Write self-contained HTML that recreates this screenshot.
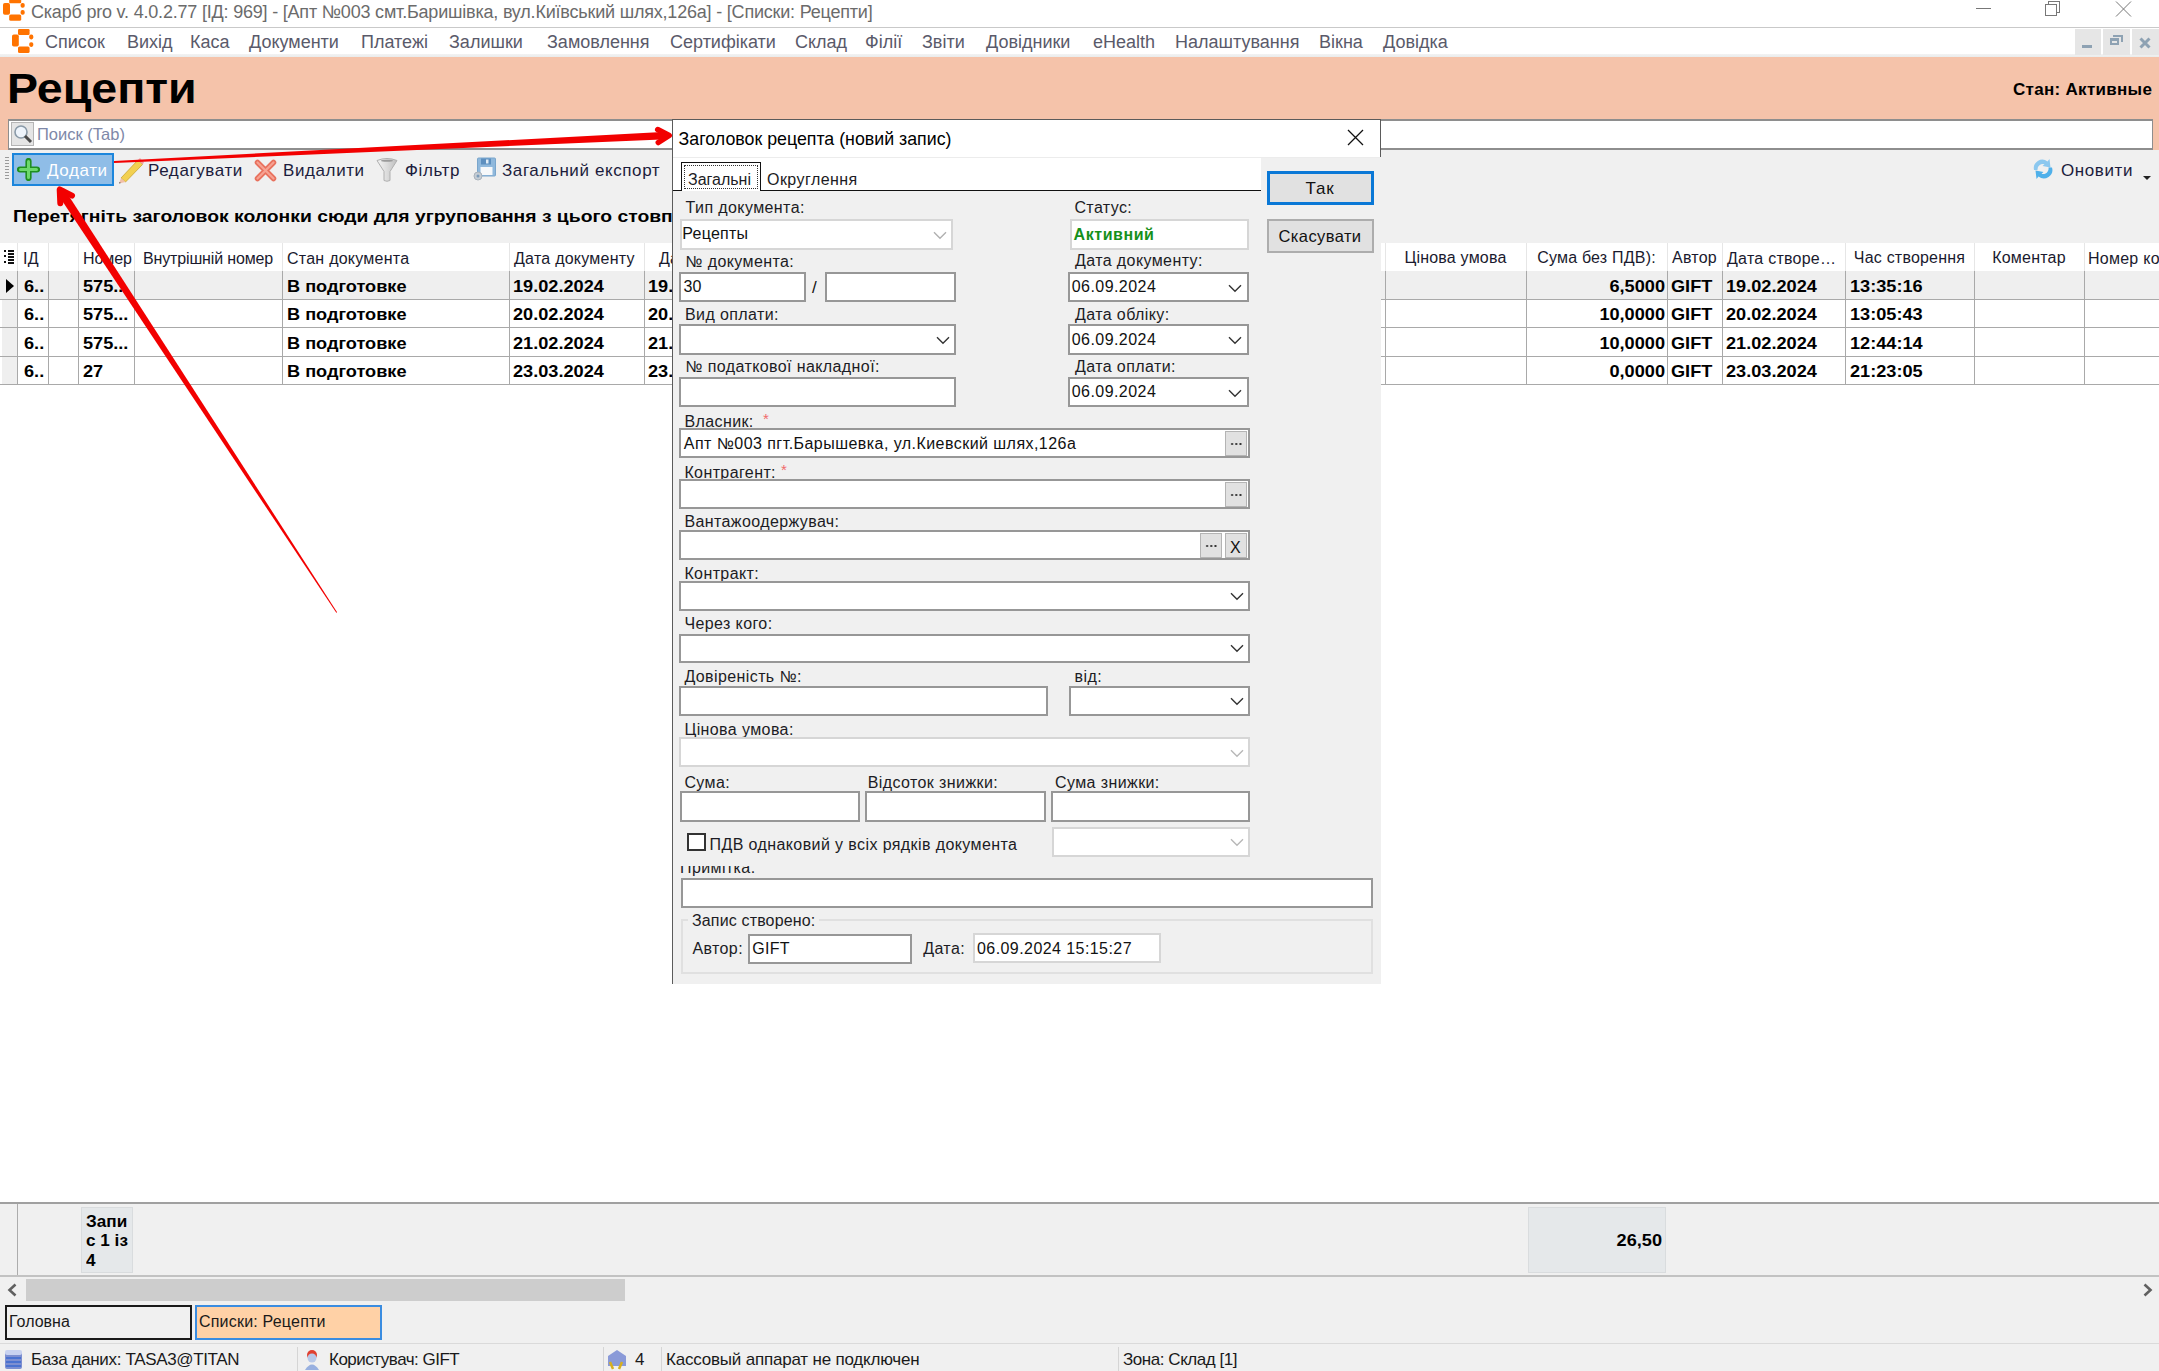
<!DOCTYPE html>
<html><head><meta charset="utf-8">
<style>
*{box-sizing:border-box;margin:0;padding:0}
html,body{width:2159px;height:1371px;overflow:hidden;background:#fff}
body{position:relative;font-family:"Liberation Sans",sans-serif;color:#000}
.a{position:absolute}
.t{position:absolute;white-space:nowrap;line-height:1}
</style></head><body>

<!-- TITLE BAR -->
<div class="a" style="left:0;top:0;width:2159px;height:27px;background:#fff"></div>
<div class="a" style="left:0;top:27px;width:2159px;height:1px;background:#c9c9c9"></div>
<svg class="a" style="left:3px;top:-3px" width="23" height="24"><g fill="#ff7300"><rect x="6.2" y="0" width="12" height="6.2" rx="1"/><rect x="0" y="5.9" width="7" height="11.8" rx="1.8"/><rect x="6.2" y="17.4" width="12" height="6.4" rx="1.6"/><rect x="17.6" y="5.9" width="4.1" height="4.8" rx="1.8"/><rect x="17.6" y="13.1" width="4.1" height="4.6" rx="1.8"/></g></svg>
<div class="t" id="ttl" style="left:31px;top:2.5px;font-size:18px;color:#6b6b6b;letter-spacing:-0.2px">Скарб pro v. 4.0.2.77 [ІД: 969] - [Апт №003 смт.Баришівка, вул.Київський шлях,126а] - [Списки: Рецепти]</div>
<div class="a" style="left:1976px;top:8px;width:15px;height:1px;background:#777"></div>
<div class="a" style="left:2048px;top:1px;width:12px;height:12px;border:1px solid #777"></div>
<div class="a" style="left:2045px;top:4px;width:12px;height:12px;border:1px solid #777;background:#fff"></div>
<svg class="a" style="left:2115px;top:1px" width="17" height="16"><path d="M1 0.5 L16 15.5 M16 0.5 L1 15.5" stroke="#777" stroke-width="1"/></svg>

<!-- MENU BAR -->
<div class="a" style="left:0;top:28px;width:2159px;height:26px;background:#fff"></div>
<div class="a" style="left:0;top:54px;width:2159px;height:3px;background:linear-gradient(#f3f3f3,#e9ecec)"></div>
<svg class="a" style="left:11.8px;top:28.6px" width="23" height="25"><g fill="#ff7300"><rect x="6" y="0" width="11.6" height="5.9" rx="1.2"/><rect x="0" y="5.5" width="6.8" height="12" rx="1.8"/><rect x="6" y="17.5" width="11.6" height="6.6" rx="1.6"/><rect x="17.2" y="5.6" width="4.1" height="4.8" rx="1.8"/><rect x="17.2" y="13.2" width="4.1" height="4.7" rx="1.8"/></g></svg>
<div class="t" style="left:45px;top:33px;font-size:18px;color:#5a5a6a;word-spacing:0">
<span style="position:absolute;left:0">Список</span><span style="position:absolute;left:82px">Вихід</span><span style="position:absolute;left:145px">Каса</span><span style="position:absolute;left:204px">Документи</span><span style="position:absolute;left:316px">Платежі</span><span style="position:absolute;left:404px">Залишки</span><span style="position:absolute;left:502px">Замовлення</span><span style="position:absolute;left:625px">Сертифікати</span><span style="position:absolute;left:750px">Склад</span><span style="position:absolute;left:820px">Філії</span><span style="position:absolute;left:877px">Звіти</span><span style="position:absolute;left:941px">Довідники</span><span style="position:absolute;left:1048px">eHealth</span><span style="position:absolute;left:1130px">Налаштування</span><span style="position:absolute;left:1274px">Вікна</span><span style="position:absolute;left:1338px">Довідка</span>
</div>
<div class="a" style="left:2075px;top:29px;width:26px;height:26px;background:#e6e6e6"></div>
<div class="a" style="left:2103px;top:29px;width:27px;height:26px;background:#e6e6e6"></div>
<div class="a" style="left:2132px;top:29px;width:27px;height:26px;background:#e6e6e6"></div>
<div class="a" style="left:2082px;top:45px;width:10px;height:3px;background:#8ea2b3"></div>
<div class="a" style="left:2110px;top:38px;width:9px;height:7px;border:2px solid #8ea2b3;border-top-width:3px"></div>
<div class="a" style="left:2113px;top:35px;width:10px;height:7px;border-top:2px solid #8ea2b3;border-right:2px solid #8ea2b3"></div>
<svg class="a" style="left:2139px;top:37px" width="12" height="12"><path d="M1.5 1.5 L10.5 10.5 M10.5 1.5 L1.5 10.5" stroke="#8ea2b3" stroke-width="3"/></svg>

<!-- PEACH HEADER -->
<div class="a" style="left:0;top:57px;width:2159px;height:93px;background:#f5c3aa"></div>
<div class="t" style="left:6.5px;top:67px;font-size:43px;font-weight:bold;color:#000;transform:scaleX(1.082);transform-origin:0 0">Рецепти</div>
<div class="t" style="left:2013px;top:80.5px;font-size:17px;font-weight:bold;color:#000;letter-spacing:0.3px">Стан: Активные</div>

<!-- SEARCH -->
<div class="a" style="left:8px;top:119px;width:2145px;height:31px;background:#fff;border:2px solid #8e8e8e;border-left-width:1px;border-right-width:1px"></div>
<div class="a" style="left:11px;top:122px;width:23px;height:24px;background:#e5e5e5;border:1px solid #b5b5b5"></div>
<svg class="a" style="left:12px;top:123px" width="22" height="22"><circle cx="9" cy="9" r="6" fill="#eef4fb" stroke="#8a9aa8" stroke-width="1.6"/><path d="M13 13 L19 19" stroke="#4a4a4a" stroke-width="3"/></svg>
<div class="t" style="left:37px;top:125.5px;font-size:16.5px;color:#7e88a8">Поиск (Tab)</div>

<!-- TOOLBAR -->
<div class="a" style="left:0;top:150px;width:2159px;height:93px;background:#f0f0f0"></div>
<div class="a" style="left:5px;top:157px;width:4px;height:24px;background:repeating-linear-gradient(#9a9a9a 0 1px,transparent 1px 3px)"></div>
<div class="a" style="left:12px;top:153px;width:102px;height:33px;background:#8fbde7;border:2px solid #1c86dc"></div>
<svg class="a" style="left:17px;top:158px" width="23" height="23"><path d="M11.5 3 V20 M3 11.5 H20" stroke="#1f8f1f" stroke-width="6.2" stroke-linecap="round"/><path d="M11.5 3.5 V19.5 M3.5 11.5 H19.5" stroke="#6cd86c" stroke-width="3" stroke-linecap="round"/></svg>
<div class="t" style="left:47px;top:162px;font-size:17px;color:#fff;letter-spacing:0.6px">Додати</div>
<svg class="a" style="left:117px;top:156px" width="28" height="28"><path d="M4 22 L21 4 L25.5 8.5 L8.5 26 Z" fill="#f2d050" stroke="#c9a530" stroke-width="0.8"/><path d="M21 4 L23 2 L27 6.5 L25.5 8.5 Z" fill="#f0a0a0"/><path d="M4 22 L2 27.5 L8.5 26 Z" fill="#f2c0a8"/><path d="M2.5 26 L2 27.5 L4 27 Z" fill="#555"/></svg>
<div class="t" style="left:148px;top:162px;font-size:17px;color:#1c1c3c;letter-spacing:0.6px">Редагувати</div>
<svg class="a" style="left:254px;top:159px" width="23" height="23"><path d="M3.5 3.5 L19.5 19.5 M19.5 3.5 L3.5 19.5" stroke="#e8705c" stroke-width="5.5" stroke-linecap="round"/><path d="M3.5 3.5 L19.5 19.5 M19.5 3.5 L3.5 19.5" stroke="#f7a292" stroke-width="2.2" stroke-linecap="round"/></svg>
<div class="t" style="left:283px;top:162px;font-size:17px;color:#1c1c3c;letter-spacing:0.6px">Видалити</div>
<svg class="a" style="left:376px;top:157px" width="22" height="25"><defs><linearGradient id="fg" x1="0" x2="1"><stop offset="0" stop-color="#f4f4f4"/><stop offset="0.5" stop-color="#dcdcdc"/><stop offset="1" stop-color="#bdbdbd"/></linearGradient></defs><path d="M1 3.5 Q11 -0.5 21 3.5 L14 14.5 V23.5 Q11 25 8 23.5 V14.5 Z" fill="url(#fg)" stroke="#b0b0b0" stroke-width="1"/><ellipse cx="11" cy="3.8" rx="6" ry="1" fill="#9a9a9a"/></svg>
<div class="t" style="left:405px;top:162px;font-size:17px;color:#1c1c3c;letter-spacing:0.6px">Фільтр</div>
<svg class="a" style="left:472px;top:157px" width="25" height="25"><rect x="5.5" y="1" width="18" height="18" rx="1" fill="#8fb8dc" stroke="#7aa6cc"/><rect x="9" y="1.5" width="10" height="6" fill="#5d8fbf"/><rect x="14" y="2.5" width="2.5" height="4" fill="#e0ecf6"/><rect x="8.5" y="10" width="12" height="8" fill="#f6f8fa"/><circle cx="6" cy="19" r="4" fill="#c4ccd4" stroke="#a8b2bc"/><circle cx="6" cy="19" r="1.5" fill="#7a9ab8"/></svg>
<div class="t" style="left:502px;top:162px;font-size:17px;color:#1c1c3c;letter-spacing:0.6px">Загальний експорт</div>
<svg class="a" style="left:2032px;top:158px" width="22" height="22"><path d="M2 12 A8.5 8.5 0 0 1 15.5 3.5 L17.5 1 L18.5 9.5 L10.5 8 L12.5 6.2 A5.5 5.5 0 0 0 5.5 12 Z" fill="#8cc8ef"/><path d="M20 9.5 A8.5 8.5 0 0 1 6.5 18.5 L4.5 21 L3.5 12.5 L11.5 14 L9.5 15.8 A5.5 5.5 0 0 0 16.5 9.5 Z" fill="#4fb0ea"/></svg>
<div class="t" style="left:2061px;top:162px;font-size:17px;color:#1c1c3c;letter-spacing:0.6px">Оновити</div>
<div class="a" style="left:2143px;top:176px;width:0;height:0;border-left:4px solid transparent;border-right:4px solid transparent;border-top:4px solid #222"></div>

<div class="t" style="left:13px;top:208px;font-size:17px;font-weight:bold;color:#000;transform:scaleX(1.137);transform-origin:0 0">Перетягніть заголовок колонки сюди для угруповання з цього стовпця</div>

<!-- GRID -->
<div id="grid" class="a" style="left:0;top:243px;width:2159px;height:959px;background:#fff"></div>
<div class="a" style="left:0;top:243px;width:2159px;height:28px;background:#fff"></div>
<div class="a" style="left:17px;top:243px;width:1px;height:28px;background:#e6e6e6"></div>
<div class="a" style="left:48px;top:243px;width:1px;height:28px;background:#e6e6e6"></div>
<div class="a" style="left:78px;top:243px;width:1px;height:28px;background:#e6e6e6"></div>
<div class="a" style="left:134px;top:243px;width:1px;height:28px;background:#e6e6e6"></div>
<div class="a" style="left:282px;top:243px;width:1px;height:28px;background:#e6e6e6"></div>
<div class="a" style="left:509px;top:243px;width:1px;height:28px;background:#e6e6e6"></div>
<div class="a" style="left:644px;top:243px;width:1px;height:28px;background:#e6e6e6"></div>
<div class="a" style="left:1385px;top:243px;width:1px;height:28px;background:#e6e6e6"></div>
<div class="a" style="left:1526px;top:243px;width:1px;height:28px;background:#e6e6e6"></div>
<div class="a" style="left:1667px;top:243px;width:1px;height:28px;background:#e6e6e6"></div>
<div class="a" style="left:1722px;top:243px;width:1px;height:28px;background:#e6e6e6"></div>
<div class="a" style="left:1845px;top:243px;width:1px;height:28px;background:#e6e6e6"></div>
<div class="a" style="left:1974px;top:243px;width:1px;height:28px;background:#e6e6e6"></div>
<div class="a" style="left:2084px;top:243px;width:1px;height:28px;background:#e6e6e6"></div>
<div class="a" style="left:0;top:271px;width:2159px;height:28px;background:#efefef"></div>
<div class="a" style="left:2px;top:271px;width:15px;height:113px;background:#efefef"></div>
<div class="a" style="left:17px;top:271px;width:1px;height:113px;background:#a9a9a9"></div>
<div class="a" style="left:48px;top:271px;width:1px;height:113px;background:#a9a9a9"></div>
<div class="a" style="left:78px;top:271px;width:1px;height:113px;background:#a9a9a9"></div>
<div class="a" style="left:134px;top:271px;width:1px;height:113px;background:#a9a9a9"></div>
<div class="a" style="left:282px;top:271px;width:1px;height:113px;background:#a9a9a9"></div>
<div class="a" style="left:509px;top:271px;width:1px;height:113px;background:#a9a9a9"></div>
<div class="a" style="left:644px;top:271px;width:1px;height:113px;background:#a9a9a9"></div>
<div class="a" style="left:1385px;top:271px;width:1px;height:113px;background:#a9a9a9"></div>
<div class="a" style="left:1526px;top:271px;width:1px;height:113px;background:#a9a9a9"></div>
<div class="a" style="left:1667px;top:271px;width:1px;height:113px;background:#a9a9a9"></div>
<div class="a" style="left:1722px;top:271px;width:1px;height:113px;background:#a9a9a9"></div>
<div class="a" style="left:1845px;top:271px;width:1px;height:113px;background:#a9a9a9"></div>
<div class="a" style="left:1974px;top:271px;width:1px;height:113px;background:#a9a9a9"></div>
<div class="a" style="left:2084px;top:271px;width:1px;height:113px;background:#a9a9a9"></div>
<div class="a" style="left:0;top:299px;width:2159px;height:1px;background:#a9a9a9"></div>
<div class="a" style="left:0;top:327px;width:2159px;height:1px;background:#a9a9a9"></div>
<div class="a" style="left:0;top:356px;width:2159px;height:1px;background:#a9a9a9"></div>
<div class="a" style="left:0;top:384px;width:2159px;height:1px;background:#a9a9a9"></div>
<div class="a" style="left:4px;top:250px;width:2px;height:14px;background:repeating-linear-gradient(#111 0 2px,transparent 2px 5.5px)"></div>
<div class="a" style="left:8px;top:250px;width:6px;height:14px;background:repeating-linear-gradient(#111 0 1.6px,transparent 1.6px 3px)"></div>
<div class="a" style="left:6px;top:279px;width:0;height:0;border-top:7px solid transparent;border-bottom:7px solid transparent;border-left:8px solid #000"></div>
<div class="t" style="left:23px;top:251px;font-size:16px;color:#1a1a2e;letter-spacing:0.25px">ІД</div>
<div class="t" style="left:83px;top:251px;font-size:16px;color:#1a1a2e;letter-spacing:-0.1px">Номер</div>
<div class="t" style="left:143px;top:251px;font-size:16px;color:#1a1a2e;letter-spacing:-0.15px">Внутрішній номер</div>
<div class="t" style="left:287px;top:251px;font-size:16px;color:#1a1a2e;letter-spacing:0.25px">Стан документа</div>
<div class="t" style="left:514px;top:251px;font-size:16px;color:#1a1a2e;letter-spacing:0.25px">Дата документу</div>
<div class="t" style="left:659px;top:251px;font-size:16px;color:#1a1a2e;letter-spacing:0.25px">Дата обліку</div>
<div class="t" style="left:1385px;top:250px;width:141px;text-align:center;font-size:16px;color:#1a1a2e;letter-spacing:0.2px">Цінова умова</div>
<div class="t" style="left:1526px;top:250px;width:141px;text-align:center;font-size:16px;color:#1a1a2e;letter-spacing:0.2px">Сума без ПДВ):</div>
<div class="t" style="left:1667px;top:250px;width:55px;text-align:center;font-size:16px;color:#1a1a2e;letter-spacing:0.2px">Автор</div>
<div class="t" style="left:1727px;top:251px;font-size:16px;color:#1a1a2e;letter-spacing:0.25px">Дата створе…</div>
<div class="t" style="left:1845px;top:250px;width:129px;text-align:center;font-size:16px;color:#1a1a2e;letter-spacing:0.2px">Час створення</div>
<div class="t" style="left:1974px;top:250px;width:110px;text-align:center;font-size:16px;color:#1a1a2e;letter-spacing:0.2px">Коментар</div>
<div class="t" style="left:2088px;top:251px;font-size:16px;color:#1a1a2e;letter-spacing:0.25px">Номер контрагента</div>
<div class="t" style="left:24px;top:277.8px;font-size:16.5px;font-weight:bold;transform:scaleX(1.1);transform-origin:0 0">6..</div>
<div class="t" style="left:83px;top:277.8px;font-size:16.5px;font-weight:bold;transform:scaleX(1.1);transform-origin:0 0">575...</div>
<div class="t" style="left:287px;top:277.8px;font-size:16.5px;font-weight:bold;transform:scaleX(1.1);transform-origin:0 0">В подготовке</div>
<div class="t" style="left:513px;top:277.8px;font-size:16.5px;font-weight:bold;transform:scaleX(1.1);transform-origin:0 0">19.02.2024</div>
<div class="t" style="left:648px;top:277.8px;font-size:16.5px;font-weight:bold;transform:scaleX(1.1);transform-origin:0 0">19.02.2024</div>
<div class="t" style="left:1526px;width:139px;text-align:right;top:277.8px;font-size:16.5px;font-weight:bold;transform:scaleX(1.1);transform-origin:100% 0">6,5000</div>
<div class="t" style="left:1671px;top:277.8px;font-size:16.5px;font-weight:bold;transform:scaleX(1.1);transform-origin:0 0">GIFT</div>
<div class="t" style="left:1726px;top:277.8px;font-size:16.5px;font-weight:bold;transform:scaleX(1.1);transform-origin:0 0">19.02.2024</div>
<div class="t" style="left:1850px;top:277.8px;font-size:16.5px;font-weight:bold;transform:scaleX(1.1);transform-origin:0 0">13:35:16</div>
<div class="t" style="left:24px;top:306.2px;font-size:16.5px;font-weight:bold;transform:scaleX(1.1);transform-origin:0 0">6..</div>
<div class="t" style="left:83px;top:306.2px;font-size:16.5px;font-weight:bold;transform:scaleX(1.1);transform-origin:0 0">575...</div>
<div class="t" style="left:287px;top:306.2px;font-size:16.5px;font-weight:bold;transform:scaleX(1.1);transform-origin:0 0">В подготовке</div>
<div class="t" style="left:513px;top:306.2px;font-size:16.5px;font-weight:bold;transform:scaleX(1.1);transform-origin:0 0">20.02.2024</div>
<div class="t" style="left:648px;top:306.2px;font-size:16.5px;font-weight:bold;transform:scaleX(1.1);transform-origin:0 0">20.02.2024</div>
<div class="t" style="left:1526px;width:139px;text-align:right;top:306.2px;font-size:16.5px;font-weight:bold;transform:scaleX(1.1);transform-origin:100% 0">10,0000</div>
<div class="t" style="left:1671px;top:306.2px;font-size:16.5px;font-weight:bold;transform:scaleX(1.1);transform-origin:0 0">GIFT</div>
<div class="t" style="left:1726px;top:306.2px;font-size:16.5px;font-weight:bold;transform:scaleX(1.1);transform-origin:0 0">20.02.2024</div>
<div class="t" style="left:1850px;top:306.2px;font-size:16.5px;font-weight:bold;transform:scaleX(1.1);transform-origin:0 0">13:05:43</div>
<div class="t" style="left:24px;top:334.7px;font-size:16.5px;font-weight:bold;transform:scaleX(1.1);transform-origin:0 0">6..</div>
<div class="t" style="left:83px;top:334.7px;font-size:16.5px;font-weight:bold;transform:scaleX(1.1);transform-origin:0 0">575...</div>
<div class="t" style="left:287px;top:334.7px;font-size:16.5px;font-weight:bold;transform:scaleX(1.1);transform-origin:0 0">В подготовке</div>
<div class="t" style="left:513px;top:334.7px;font-size:16.5px;font-weight:bold;transform:scaleX(1.1);transform-origin:0 0">21.02.2024</div>
<div class="t" style="left:648px;top:334.7px;font-size:16.5px;font-weight:bold;transform:scaleX(1.1);transform-origin:0 0">21.02.2024</div>
<div class="t" style="left:1526px;width:139px;text-align:right;top:334.7px;font-size:16.5px;font-weight:bold;transform:scaleX(1.1);transform-origin:100% 0">10,0000</div>
<div class="t" style="left:1671px;top:334.7px;font-size:16.5px;font-weight:bold;transform:scaleX(1.1);transform-origin:0 0">GIFT</div>
<div class="t" style="left:1726px;top:334.7px;font-size:16.5px;font-weight:bold;transform:scaleX(1.1);transform-origin:0 0">21.02.2024</div>
<div class="t" style="left:1850px;top:334.7px;font-size:16.5px;font-weight:bold;transform:scaleX(1.1);transform-origin:0 0">12:44:14</div>
<div class="t" style="left:24px;top:363.1px;font-size:16.5px;font-weight:bold;transform:scaleX(1.1);transform-origin:0 0">6..</div>
<div class="t" style="left:83px;top:363.1px;font-size:16.5px;font-weight:bold;transform:scaleX(1.1);transform-origin:0 0">27</div>
<div class="t" style="left:287px;top:363.1px;font-size:16.5px;font-weight:bold;transform:scaleX(1.1);transform-origin:0 0">В подготовке</div>
<div class="t" style="left:513px;top:363.1px;font-size:16.5px;font-weight:bold;transform:scaleX(1.1);transform-origin:0 0">23.03.2024</div>
<div class="t" style="left:648px;top:363.1px;font-size:16.5px;font-weight:bold;transform:scaleX(1.1);transform-origin:0 0">23.03.2024</div>
<div class="t" style="left:1526px;width:139px;text-align:right;top:363.1px;font-size:16.5px;font-weight:bold;transform:scaleX(1.1);transform-origin:100% 0">0,0000</div>
<div class="t" style="left:1671px;top:363.1px;font-size:16.5px;font-weight:bold;transform:scaleX(1.1);transform-origin:0 0">GIFT</div>
<div class="t" style="left:1726px;top:363.1px;font-size:16.5px;font-weight:bold;transform:scaleX(1.1);transform-origin:0 0">23.03.2024</div>
<div class="t" style="left:1850px;top:363.1px;font-size:16.5px;font-weight:bold;transform:scaleX(1.1);transform-origin:0 0">21:23:05</div>
<!-- ENDGRID -->
<!-- FOOTER -->
<div class="a" style="left:0;top:1202px;width:2159px;height:2px;background:#a0a0a0"></div>
<div class="a" style="left:0;top:1204px;width:2159px;height:72px;background:#f0f0f0"></div>
<div class="a" style="left:17px;top:1204px;width:1px;height:72px;background:#acacac"></div>
<div class="a" style="left:0;top:1275px;width:2159px;height:2px;background:#c2c2c2"></div>
<div class="a" style="left:81px;top:1207px;width:52px;height:66px;background:#e5e8ea;border:1px solid #d9dcde"></div>
<div class="a" style="left:85.5px;top:1212.2px;font-size:16.5px;line-height:19.2px;font-weight:bold;white-space:nowrap;transform:scaleX(1.04);transform-origin:0 0">Запи<br>с 1 із<br>4</div>
<div class="a" style="left:1528px;top:1207px;width:138px;height:66px;background:#e5e8ea;border:1px solid #d9dcde"></div>
<div class="t" style="left:1528px;width:134px;text-align:right;top:1232px;font-size:16.5px;font-weight:bold;transform:scaleX(1.1);transform-origin:100% 0">26,50</div>
<!-- SCROLLBAR -->
<div class="a" style="left:0;top:1277px;width:2159px;height:24px;background:#f0f0f0"></div>
<div class="a" style="left:26px;top:1279px;width:599px;height:22px;background:#cdcdcd"></div>
<svg class="a" style="left:6px;top:1283px" width="12" height="14"><path d="M9.5 1.5 L3.5 7 L9.5 12.5" fill="none" stroke="#606060" stroke-width="2.6"/></svg>
<svg class="a" style="left:2142px;top:1283px" width="12" height="14"><path d="M2.5 1.5 L8.5 7 L2.5 12.5" fill="none" stroke="#606060" stroke-width="2.6"/></svg>
<!-- TABS -->
<div class="a" style="left:0;top:1301px;width:2159px;height:42px;background:#f0f0f0"></div>
<div class="a" style="left:5px;top:1305px;width:187px;height:35px;border:2px solid #1a1a1a;background:#f0f0f0"></div>
<div class="t" style="left:9px;top:1314px;font-size:16px;color:#1a1a1a">Головна</div>
<div class="a" style="left:195px;top:1305px;width:187px;height:35px;border:2px solid #3a8ce0;background:#ffd1a6"></div>
<div class="t" style="left:199px;top:1314px;font-size:16px;color:#1a1a1a;letter-spacing:0.2px">Списки: Рецепти</div>
<div class="a" style="left:0;top:1343px;width:2159px;height:1px;background:#dadada"></div>
<!-- STATUS BAR -->
<div class="a" style="left:0;top:1344px;width:2159px;height:27px;background:#f0f0f0"></div>
<div class="a" style="left:297px;top:1347px;width:1px;height:24px;background:#d5d5d5"></div>
<div class="a" style="left:603px;top:1347px;width:1px;height:24px;background:#d5d5d5"></div>
<div class="a" style="left:661px;top:1347px;width:1px;height:24px;background:#d5d5d5"></div>
<div class="a" style="left:1118px;top:1347px;width:1px;height:24px;background:#d5d5d5"></div>
<svg class="a" style="left:4px;top:1349px" width="20" height="22"><rect x="1" y="3" width="17" height="17" rx="2" fill="#7d8fd0"/><rect x="1" y="1" width="17" height="5" rx="2" fill="#c8d2f0"/><path d="M2 9 H17 M2 13 H17 M2 17 H17" stroke="#3a6ad0" stroke-width="1.6"/></svg>
<div class="t" style="left:31px;top:1351px;font-size:17px;color:#1a1a1a;letter-spacing:-0.35px">База даних: TASA3@TITAN</div>
<svg class="a" style="left:303px;top:1349px" width="18" height="22"><circle cx="9" cy="6" r="5" fill="#e04030"/><circle cx="9" cy="9" r="4.5" fill="#b8c8e8"/><path d="M2 21 Q9 10 16 21 Z" fill="#98b0e0"/></svg>
<div class="t" style="left:329px;top:1351px;font-size:17px;color:#1a1a1a;letter-spacing:-0.5px">Користувач: GIFT</div>
<svg class="a" style="left:606px;top:1348px" width="22" height="22"><path d="M2 8 L11 2 L20 8 V18 H2 Z" fill="#8a9ad8"/><path d="M4 14 L7 21 M16 14 L13 21" stroke="#d8b020" stroke-width="2.5"/></svg>
<div class="t" style="left:635px;top:1351px;font-size:17px;color:#1a1a1a">4</div>
<div class="t" style="left:666px;top:1351px;font-size:17px;color:#1a1a1a;letter-spacing:-0.2px">Кассовый аппарат не подключен</div>
<div class="t" style="left:1123px;top:1351px;font-size:17px;color:#1a1a1a;letter-spacing:-0.45px">Зона: Склад [1]</div>
<!-- ENDFOOTER -->
<!-- DIALOG -->
<div class="a" style="left:672.0px;top:119.0px;width:709.0px;height:38.0px;background:#fff;border:1px solid #5b5b5b;border-bottom:none"></div>
<div class="a" style="left:672.0px;top:157.0px;width:709.0px;height:827.0px;background:#f0f0f0"></div>
<div class="a" style="left:672.0px;top:157.0px;width:1.0px;height:827.0px;background:#5b5b5b"></div>
<div class="a" style="left:673.0px;top:157.0px;width:707.0px;height:1.0px;background:#ececec"></div>
<div class="t" style="left:678.6px;top:130.8px;font-size:17.8px;color:#000">Заголовок рецепта (новий запис)</div>
<svg class="a" style="left:1347px;top:129px" width="17" height="17"><path d="M1 1 L16 16 M16 1 L1 16" stroke="#111" stroke-width="1.3"/></svg>
<div class="a" style="left:673.0px;top:158.0px;width:588.0px;height:33.0px;background:#fff"></div>
<div class="a" style="left:673.0px;top:189.5px;width:588.0px;height:1.5px;background:#111"></div>
<div class="a" style="left:681.0px;top:162.0px;width:80.0px;height:29.0px;background:#fff;border:1.5px solid #111;border-bottom:none"></div>
<div class="a" style="left:684.0px;top:165.0px;width:74.0px;height:24.0px;border:1px dotted #333"></div>
<div class="t" style="left:688px;top:171.5px;font-size:16px;color:#1c1c24">Загальні</div>
<div class="t" style="left:767px;top:171.5px;font-size:16px;letter-spacing:0.45px;color:#1c1c24">Округлення</div>
<div class="a" style="left:1267.0px;top:170.5px;width:106.5px;height:34.5px;background:#e1e1e1;border:3px solid #0a78d6"></div>
<div class="t" style="left:1267px;width:106px;text-align:center;top:179.5px;font-size:17px;letter-spacing:0.8px;color:#111">Так</div>
<div class="a" style="left:1267.0px;top:218.5px;width:106.5px;height:34.5px;background:#e1e1e1;border:2px solid #adadad"></div>
<div class="t" style="left:1267px;width:106px;text-align:center;top:227.7px;font-size:16.5px;letter-spacing:0.4px;color:#111">Скасувати</div>
<div class="t" style="left:685.6px;top:200.1px;font-size:16px;letter-spacing:0.4px;color:#1c1c24;">Тип документа:</div>
<div class="a" style="left:679.5px;top:219.0px;width:273.5px;height:30.5px;background:#fff;border:2px solid #d6d6d6"></div>
<div class="t" style="left:682.3px;top:225.6px;font-size:16px;letter-spacing:0.25px;color:#111">Рецепты</div>
<svg class="a" style="left:933.0px;top:230.5px" width="14" height="9"><path d="M1 1.2 L7 7.2 L13 1.2" fill="none" stroke="#b0b0b0" stroke-width="1.4"/></svg>
<div class="t" style="left:1074.4px;top:200.1px;font-size:16px;letter-spacing:0.4px;color:#1c1c24;">Статус:</div>
<div class="a" style="left:1069.5px;top:219.0px;width:179.0px;height:30.5px;background:#fff;border:2px solid #d6d6d6"></div>
<div class="t" style="left:1073.6px;top:226.7px;font-size:16px;font-weight:bold;letter-spacing:0.55px;color:#16901a">Активний</div>
<div class="t" style="left:685.3px;top:253.7px;font-size:16px;letter-spacing:0.4px;color:#1c1c24;">№ документа:</div>
<div class="a" style="left:679.0px;top:271.5px;width:127.0px;height:30.5px;background:#fff;border:2px solid #979797"></div>
<div class="t" style="left:683.6px;top:279.2px;font-size:16px;color:#111">30</div>
<div class="t" style="left:812px;top:279.2px;font-size:17px;color:#111">/</div>
<div class="a" style="left:825.0px;top:271.5px;width:131.0px;height:30.5px;background:#fff;border:2px solid #979797"></div>
<div class="t" style="left:1075.0px;top:252.9px;font-size:16px;letter-spacing:0.4px;color:#1c1c24;">Дата документу:</div>
<div class="a" style="left:1068.0px;top:271.5px;width:180.5px;height:30.5px;background:#fff;border:2px solid #979797"></div>
<div class="t" style="left:1071.7px;top:279.2px;font-size:16px;letter-spacing:0.45px;color:#111">06.09.2024</div>
<svg class="a" style="left:1228.0px;top:283.5px" width="14" height="9"><path d="M1 1.2 L7 7.2 L13 1.2" fill="none" stroke="#333" stroke-width="1.4"/></svg>
<div class="t" style="left:685.0px;top:307.1px;font-size:16px;letter-spacing:0.4px;color:#1c1c24;">Вид оплати:</div>
<div class="a" style="left:679.0px;top:324.0px;width:277.0px;height:30.5px;background:#fff;border:2px solid #979797"></div>
<svg class="a" style="left:936.0px;top:335.5px" width="14" height="9"><path d="M1 1.2 L7 7.2 L13 1.2" fill="none" stroke="#333" stroke-width="1.4"/></svg>
<div class="t" style="left:1075.0px;top:306.7px;font-size:16px;letter-spacing:0.4px;color:#1c1c24;">Дата обліку:</div>
<div class="a" style="left:1068.0px;top:324.4px;width:180.5px;height:30.4px;background:#fff;border:2px solid #979797"></div>
<div class="t" style="left:1071.7px;top:331.8px;font-size:16px;letter-spacing:0.45px;color:#111">06.09.2024</div>
<svg class="a" style="left:1228.0px;top:336.1px" width="14" height="9"><path d="M1 1.2 L7 7.2 L13 1.2" fill="none" stroke="#333" stroke-width="1.4"/></svg>
<div class="t" style="left:685.3px;top:359.1px;font-size:16px;letter-spacing:0.4px;color:#1c1c24;">№ податкової накладної:</div>
<div class="a" style="left:679.0px;top:376.8px;width:277.0px;height:30.2px;background:#fff;border:2px solid #979797"></div>
<div class="t" style="left:1075.0px;top:358.6px;font-size:16px;letter-spacing:0.4px;color:#1c1c24;">Дата оплати:</div>
<div class="a" style="left:1068.0px;top:376.6px;width:180.5px;height:30.4px;background:#fff;border:2px solid #979797"></div>
<div class="t" style="left:1071.7px;top:384.2px;font-size:16px;letter-spacing:0.45px;color:#111">06.09.2024</div>
<svg class="a" style="left:1228.0px;top:388.5px" width="14" height="9"><path d="M1 1.2 L7 7.2 L13 1.2" fill="none" stroke="#333" stroke-width="1.4"/></svg>
<div class="t" style="left:684.4px;top:413.8px;font-size:16px;letter-spacing:0.4px;color:#1c1c24;">Власник:</div>
<div class="t" style="left:763px;top:411.2px;font-size:15px;color:#f06a6a">*</div>
<div class="a" style="left:679.0px;top:427.7px;width:571.0px;height:30.5px;background:#fff;border:2px solid #979797"></div>
<div class="t" style="left:683.8px;top:435.5px;font-size:16px;letter-spacing:0.45px;color:#111">Апт №003 пгт.Барышевка, ул.Киевский шлях,126а</div>
<div class="a" style="left:1225.0px;top:430.5px;width:22.0px;height:25.0px;background:#e1e1e1;border:1px solid #b4b4b4"></div>
<div class="a" style="left:1230.0px;top:442.5px;width:12px;height:2px;background:radial-gradient(circle,#333 0 0.9px,transparent 1.1px) 0 0/4.2px 2px repeat-x"></div>
<div class="t" style="left:684.4px;top:464.5px;font-size:16px;letter-spacing:0.4px;color:#1c1c24;">Контрагент:</div>
<div class="t" style="left:781px;top:462.2px;font-size:15px;color:#f06a6a">*</div>
<div class="a" style="left:679.0px;top:478.7px;width:571.0px;height:30.3px;background:#fff;border:2px solid #979797"></div>
<div class="a" style="left:1225.0px;top:481.5px;width:22.0px;height:25.0px;background:#e1e1e1;border:1px solid #b4b4b4"></div>
<div class="a" style="left:1230.0px;top:493.5px;width:12px;height:2px;background:radial-gradient(circle,#333 0 0.9px,transparent 1.1px) 0 0/4.2px 2px repeat-x"></div>
<div class="t" style="left:684.4px;top:513.9px;font-size:16px;letter-spacing:0.4px;color:#1c1c24;">Вантажоодержувач:</div>
<div class="a" style="left:679.0px;top:529.7px;width:571.0px;height:30.5px;background:#fff;border:2px solid #979797"></div>
<div class="a" style="left:1200.0px;top:532.5px;width:22.0px;height:25.0px;background:#e1e1e1;border:1px solid #b4b4b4"></div>
<div class="a" style="left:1205.0px;top:544.5px;width:12px;height:2px;background:radial-gradient(circle,#333 0 0.9px,transparent 1.1px) 0 0/4.2px 2px repeat-x"></div>
<div class="a" style="left:1225.0px;top:532.5px;width:22.0px;height:25.0px;background:#e1e1e1;border:1px solid #b4b4b4"></div>
<div class="t" style="left:1230px;top:539.7px;font-size:16px;color:#111">X</div>
<div class="t" style="left:684.4px;top:565.6px;font-size:16px;letter-spacing:0.4px;color:#1c1c24;">Контракт:</div>
<div class="a" style="left:679.0px;top:581.0px;width:571.0px;height:30.0px;background:#fff;border:2px solid #979797"></div>
<svg class="a" style="left:1230.0px;top:592.0px" width="14" height="9"><path d="M1 1.2 L7 7.2 L13 1.2" fill="none" stroke="#333" stroke-width="1.4"/></svg>
<div class="t" style="left:684.4px;top:616.3px;font-size:16px;letter-spacing:0.4px;color:#1c1c24;">Через кого:</div>
<div class="a" style="left:679.0px;top:633.7px;width:571.0px;height:29.8px;background:#fff;border:2px solid #979797"></div>
<svg class="a" style="left:1230.0px;top:644.0px" width="14" height="9"><path d="M1 1.2 L7 7.2 L13 1.2" fill="none" stroke="#333" stroke-width="1.4"/></svg>
<div class="t" style="left:684.4px;top:668.5px;font-size:16px;letter-spacing:0.4px;color:#1c1c24;">Довіреність №:</div>
<div class="a" style="left:679.0px;top:685.7px;width:368.5px;height:30.6px;background:#fff;border:2px solid #979797"></div>
<div class="t" style="left:1074.6px;top:668.5px;font-size:16px;letter-spacing:0.4px;color:#1c1c24;">від:</div>
<div class="a" style="left:1069.0px;top:685.7px;width:181.0px;height:30.7px;background:#fff;border:2px solid #979797"></div>
<svg class="a" style="left:1230.0px;top:696.5px" width="14" height="9"><path d="M1 1.2 L7 7.2 L13 1.2" fill="none" stroke="#333" stroke-width="1.4"/></svg>
<div class="t" style="left:684.4px;top:722.2px;font-size:16px;letter-spacing:0.4px;color:#1c1c24;">Цінова умова:</div>
<div class="a" style="left:679.0px;top:737.0px;width:571.0px;height:30.3px;background:#fff;border:2px solid #d6d6d6"></div>
<svg class="a" style="left:1230.0px;top:748.5px" width="14" height="9"><path d="M1 1.2 L7 7.2 L13 1.2" fill="none" stroke="#b8b8b8" stroke-width="1.4"/></svg>
<div class="t" style="left:684.4px;top:775.1px;font-size:16px;letter-spacing:0.4px;color:#1c1c24;">Сума:</div>
<div class="t" style="left:867.7px;top:775.1px;font-size:16px;letter-spacing:0.4px;color:#1c1c24;">Відсоток знижки:</div>
<div class="t" style="left:1055.0px;top:775.1px;font-size:16px;letter-spacing:0.4px;color:#1c1c24;">Сума знижки:</div>
<div class="a" style="left:679.5px;top:791.0px;width:180.5px;height:30.5px;background:#fff;border:2px solid #979797"></div>
<div class="a" style="left:865.4px;top:791.0px;width:180.2px;height:30.5px;background:#fff;border:2px solid #979797"></div>
<div class="a" style="left:1051.3px;top:791.0px;width:198.7px;height:30.5px;background:#fff;border:2px solid #979797"></div>
<div class="a" style="left:686.7px;top:832.8px;width:19.1px;height:18.5px;background:#fff;border:2px solid #333"></div>
<div class="t" style="left:709.5px;top:837.1px;font-size:16px;letter-spacing:0.4px;color:#1c1c24;">ПДВ однаковий у всіх рядків документа</div>
<div class="a" style="left:1051.8px;top:827.0px;width:198.2px;height:30.0px;background:#fff;border:2px solid #d6d6d6"></div>
<svg class="a" style="left:1230.0px;top:838.0px" width="14" height="9"><path d="M1 1.2 L7 7.2 L13 1.2" fill="none" stroke="#b8b8b8" stroke-width="1.4"/></svg>
<div class="a" style="left:679px;top:866px;width:120px;height:10px;overflow:hidden"><div class="t" style="left:1px;top:-6.2px;font-size:16px;letter-spacing:0.4px;color:#1c1c24">Примітка:</div></div>
<div class="a" style="left:680.8px;top:878.0px;width:692.2px;height:30.2px;background:#fff;border:2px solid #979797"></div>
<div class="a" style="left:681.0px;top:918.7px;width:691.5px;height:55.8px;border:2px solid #e0e0e0"></div>
<div class="t" style="left:688px;top:912.6px;padding:0 4px;background:#f0f0f0;font-size:16px;letter-spacing:0.15px;color:#1c1c24">Запис створено:</div>
<div class="t" style="left:692.4px;top:941.1px;font-size:16px;letter-spacing:0.4px;color:#1c1c24;">Автор:</div>
<div class="a" style="left:748.3px;top:933.6px;width:163.7px;height:30.0px;background:#fff;border:2px solid #979797"></div>
<div class="t" style="left:752.2px;top:941.2px;font-size:16px;letter-spacing:0.3px;color:#111">GIFT</div>
<div class="t" style="left:923.2px;top:941.1px;font-size:16px;letter-spacing:0.4px;color:#1c1c24;">Дата:</div>
<div class="a" style="left:973.0px;top:933.4px;width:188.3px;height:30.1px;background:#fff;border:2px solid #d6d6d6"></div>
<div class="t" style="left:977px;top:941.2px;font-size:16px;letter-spacing:0.43px;color:#111">06.09.2024 15:15:27</div>
<!-- ENDDIALOG -->
<!-- ARROWS -->
<svg class="a" style="left:0;top:0" width="2159" height="1371"><polygon points="114.0,163.0 667.2,139.3 666.8,131.8 114.0,161.0" fill="#f20000"/><polyline points="658.3,142.5 669.2,135.5 657.7,129.5" fill="none" stroke="#f20000" stroke-width="5.5" stroke-linecap="round" stroke-linejoin="round"/><polygon points="337.1,612.2 64.2,188.7 57.1,193.3 336.3,612.8" fill="#f20000"/><polyline points="72.0,195.6 59.7,189.5 60.3,203.2" fill="none" stroke="#f20000" stroke-width="6.0" stroke-linecap="round" stroke-linejoin="round"/></svg>
<!-- ENDARROWS -->

</body></html>
